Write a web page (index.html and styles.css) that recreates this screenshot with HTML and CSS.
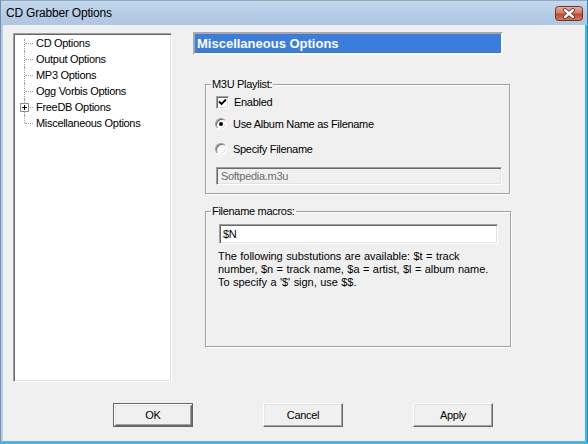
FILE: index.html
```html
<!DOCTYPE html>
<html>
<head>
<meta charset="utf-8">
<link rel="stylesheet" href="styles.css">
</head>
<body>
<div class="window">
  <div class="titlebar">
    <span class="title">CD Grabber Options</span>
    <span class="close">
      <svg width="28" height="15" viewBox="0 0 28 15">
        <defs>
          <linearGradient id="cg" x1="0" y1="0" x2="0" y2="1">
            <stop offset="0" stop-color="#e8b3a6"/>
            <stop offset="0.45" stop-color="#d27a66"/>
            <stop offset="0.55" stop-color="#c24a32"/>
            <stop offset="1" stop-color="#d9785e"/>
          </linearGradient>
        </defs>
        <rect x="0.5" y="0.5" width="27" height="14" rx="3" fill="url(#cg)" stroke="#6e3128"/>
        <path d="M10 4 L18 11 M18 4 L10 11" stroke="#5b2a22" stroke-width="4" stroke-linecap="round"/>
        <path d="M10 4 L18 11 M18 4 L10 11" stroke="#ffffff" stroke-width="2.4" stroke-linecap="round"/>
      </svg>
    </span>
  </div>
  <div class="client">
    <div class="main">
      <div class="tree">
        <div class="node first"><span class="conn"></span><span class="label">CD Options</span></div>
        <div class="node"><span class="conn"></span><span class="label">Output Options</span></div>
        <div class="node"><span class="conn"></span><span class="label">MP3 Options</span></div>
        <div class="node"><span class="conn"></span><span class="label">Ogg Vorbis Options</span></div>
        <div class="node"><span class="conn"><span class="plus"></span></span><span class="label">FreeDB Options</span></div>
        <div class="node last"><span class="conn"></span><span class="label">Miscellaneous Options</span></div>
      </div>
      <div class="pane">
        <div class="heading">Miscellaneous Options</div>
        <fieldset class="group g1">
          <legend>M3U Playlist:</legend>
          <div class="row r-check">
            <span class="checkbox"><svg width="9" height="9" viewBox="0 0 9 9"><path d="M1 3.5 L3.5 6 L8 1.5" fill="none" stroke="#000" stroke-width="1.9"/></svg></span>
            <span>Enabled</span>
          </div>
          <div class="row r-radio1">
            <span class="radio on"></span>
            <span>Use Album Name as Filename</span>
          </div>
          <div class="row r-radio2">
            <span class="radio"></span>
            <span>Specify Filename</span>
          </div>
          <div class="field disabled">Softpedia.m3u</div>
        </fieldset>
        <fieldset class="group g2">
          <legend>Filename macros:</legend>
          <div class="field edit">$N</div>
          <p class="help">The following substutions are available: $t = track<br>number, $n = track name, $a = artist, $l = album name.<br>To specify a '$' sign, use $$.</p>
        </fieldset>
      </div>
    </div>
    <div class="buttons">
      <div class="btn default">OK</div>
      <div class="btn">Cancel</div>
      <div class="btn">Apply</div>
    </div>
  </div>
</div>
</body>
</html>
```
FILE: styles.css
```css
* { box-sizing: border-box; }
html, body { margin: 0; padding: 0; }
body {
  width: 588px;
  height: 444px;
  overflow: hidden;
  font-family: "Liberation Sans", Arial, sans-serif;
  font-size: 11px;
  letter-spacing: -0.3px;
  color: #000;
}
.window {
  width: 588px;
  height: 444px;
  display: flex;
  flex-direction: column;
  background: #f0f0f0;
  border-left: 1px solid #7690ac;
  border-right: 1px solid #2a88b6;
  border-bottom: 2px solid #3cb8ea;
}
.titlebar {
  height: 25px;
  flex: none;
  display: flex;
  align-items: center;
  justify-content: space-between;
  padding: 0 4px 0 5px;
  background: linear-gradient(#c5d8ed, #b3cbe6 60%, #aec7e3);
  border-top: 1px solid #8ea7c2;
}
.title {
  font-size: 12px;
  letter-spacing: -0.2px;
  color: #000;
}
.close { display: flex; width: 28px; height: 15px; }
.client {
  flex: 1;
  border-left: 2px solid #b6cee9;
  border-right: 2px solid #3cb8ea;
  border-bottom: 1px solid #7fa7c2;
  padding-left: 10px;
}
.main {
  display: flex;
  align-items: flex-start;
}
.tree {
  margin-top: 8px;
  width: 159px;
  height: 349px;
  background: #fff;
  border-top: 1px solid #a0a0a0;
  border-left: 1px solid #a0a0a0;
  border-right: 1px solid #fff;
  border-bottom: 1px solid #fff;
  box-shadow: inset 1px 1px #696969, inset -1px -1px #e3e3e3;
  padding: 1px 0 0 1px;
}
.node {
  height: 16px;
  display: flex;
  align-items: center;
}
.conn {
  position: relative;
  flex: none;
  width: 21px;
  height: 16px;
}
.conn::before {
  content: "";
  position: absolute;
  left: 9px;
  top: 0;
  bottom: 0;
  border-left: 1px dotted #a0a0a0;
}
.first .conn::before { top: 4px; }
.last .conn::before { bottom: 8px; }
.conn::after {
  content: "";
  position: absolute;
  left: 10px;
  top: 8px;
  width: 8px;
  border-top: 1px dotted #a0a0a0;
}
.plus {
  position: absolute;
  z-index: 1;
  left: 5px;
  top: 4px;
  width: 9px;
  height: 9px;
  background: #fff;
  border: 1px solid #919191;
}
.plus::before {
  content: "";
  position: absolute;
  left: 1px;
  top: 3px;
  width: 5px;
  height: 1px;
  background: #000;
}
.plus::after {
  content: "";
  position: absolute;
  left: 3px;
  top: 1px;
  width: 1px;
  height: 5px;
  background: #000;
}
.label { white-space: nowrap; }
.pane {
  margin-top: 7px;
  margin-left: 21px;
  width: 318px;
}
.heading {
  width: 310px;
  height: 23px;
  border-style: solid;
  border-width: 2px;
  border-color: #a9a9a9 #fff #fff #a9a9a9;
  background: #3b7ddd;
  color: #fff;
  font-weight: bold;
  font-size: 13px;
  letter-spacing: 0;
  line-height: 19px;
  padding-left: 2px;
}
.group {
  margin: 0 0 0 12px;
  border: 1px solid #a0a0a0;
  box-shadow: inset 1px 1px #fff, 1px 1px #fff;
  min-inline-size: 0;
}
.group legend {
  padding: 0 1px;
  line-height: 13px;
  margin-left: -1px;
}
.g1 {
  margin-top: 23px;
  width: 305px;
  padding: 3px 7px 8px 6px;
}
.g2 {
  margin-top: 11px;
  width: 306px;
  height: 142px;
  padding: 6px 7px 0 6px;
}
.row {
  height: 16px;
  display: flex;
  align-items: center;
  white-space: nowrap;
}
.r-check { padding-left: 4px; }
.r-radio1 { margin-top: 6px; padding-left: 3px; }
.r-radio2 { margin-top: 9px; padding-left: 3px; }
.checkbox {
  flex: none;
  width: 13px;
  height: 13px;
  margin-right: 5px;
  background: #fff;
  border-style: solid;
  border-width: 1px;
  border-color: #a0a0a0 #fff #fff #a0a0a0;
  box-shadow: inset 1px 1px #696969, inset -1px -1px #e3e3e3;
  display: flex;
  align-items: center;
  justify-content: center;
}
.radio {
  flex: none;
  position: relative;
  width: 12px;
  height: 12px;
  margin-right: 6px;
  border-radius: 50%;
  background: #fff;
  border: 1px solid;
  border-color: #a0a0a0 #fff #fff #a0a0a0;
  box-shadow: inset 1px 1px #696969, inset -1px -1px #e3e3e3;
}
.radio.on::after {
  content: "";
  position: absolute;
  left: 3px;
  top: 3px;
  width: 4px;
  height: 4px;
  border-radius: 50%;
  background: #000;
}
.field {
  border-style: solid;
  border-width: 1px;
  border-color: #a0a0a0 #fff #fff #a0a0a0;
  box-shadow: inset 1px 1px #696969, inset -1px -1px #e3e3e3;
  padding-left: 3px;
  white-space: nowrap;
}
.field.disabled {
  margin-top: 10px;
  margin-left: 4px;
  width: 286px;
  height: 18px;
  line-height: 16px;
  background: #f0f0f0;
  color: #6d6d6d;
  padding-left: 4px;
}
.field.edit {
  margin-left: 7px;
  width: 279px;
  height: 20px;
  line-height: 18px;
  background: #fff;
}
.help {
  margin: 6px 0 0 6px;
  line-height: 13px;
  white-space: nowrap;
  letter-spacing: -0.05px;
  word-spacing: 0.5px;
}
.buttons {
  display: flex;
  gap: 70px;
  margin-top: 21px;
  padding-left: 100px;
}
.btn {
  width: 80px;
  height: 24px;
  display: flex;
  align-items: center;
  justify-content: center;
  background: #f0f0f0;
  border-style: solid;
  border-width: 1px;
  border-color: #fff #696969 #696969 #fff;
  box-shadow: inset -1px -1px #a0a0a0, inset 1px 1px #e3e3e3;
}
.btn.default {
  border-color: #646464;
  box-shadow: inset 1px 1px #fff, inset -1px -1px #696969, inset 2px 2px #e3e3e3, inset -2px -2px #a0a0a0;
}
```
